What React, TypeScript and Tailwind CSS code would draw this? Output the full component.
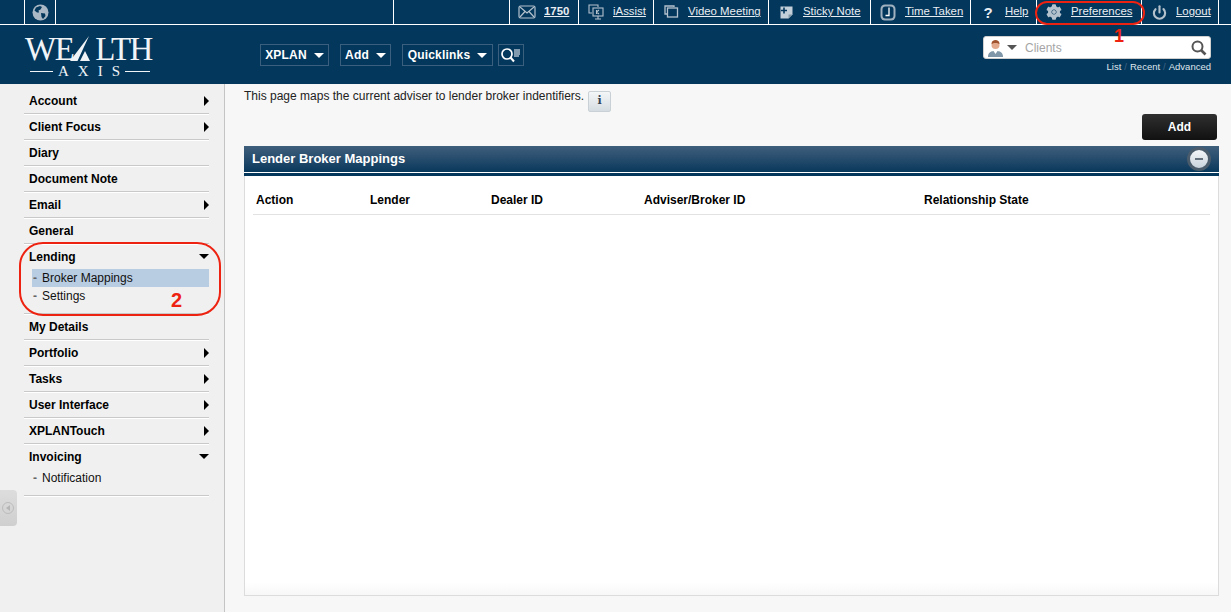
import { Power } from "lucide-react";
import { FaCog } from "react-icons/fa";

const font = "font-['Liberation_Sans',Arial,sans-serif]";

function Caret({ className = "" }: { className?: string }) {
  return (
    <span
      className={`inline-block w-0 h-0 border-l-[5px] border-r-[5px] border-t-[5px] border-l-transparent border-r-transparent ${className}`}
    />
  );
}

function TopCell({ w, icon, label, bold }: { w: string; icon: React.ReactNode; label?: string; bold?: boolean }) {
  return (
    <div className={`${w} h-6 border-r border-white flex items-center pl-2 shrink-0`}>
      <div className="w-[18px] flex justify-center shrink-0">{icon}</div>
      {label && (
        <span className={`ml-2 text-[11.4px] underline whitespace-nowrap text-[#e8edf2] ${bold ? "font-bold" : ""}`}>
          {label}
        </span>
      )}
    </div>
  );
}

function MenuButton({ label, w }: { label: string; w: string }) {
  return (
    <div className={`${w} h-[22px] border border-[#3b5f7f] flex items-center justify-center gap-[7px] text-white text-xs font-bold`}>
      <span className="tracking-[0.2px]">{label}</span>
      <Caret className="border-t-white" />
    </div>
  );
}

const items = [
  { label: "Account", arrow: true },
  { label: "Client Focus", arrow: true },
  { label: "Diary" },
  { label: "Document Note" },
  { label: "Email", arrow: true },
  { label: "General" },
  { label: "Lending", open: true, subs: ["Broker Mappings", "Settings"] },
  { label: "My Details" },
  { label: "Portfolio", arrow: true },
  { label: "Tasks", arrow: true },
  { label: "User Interface", arrow: true },
  { label: "XPLANTouch", arrow: true },
  { label: "Invoicing", open: true, subs: ["Notification"] },
];

function SideItem({ item }: { item: (typeof items)[number] }) {
  return (
    <div className="border-b border-[#c9c9c9] shadow-[0_1px_0_#fff]">
      <div className="h-[25px] flex items-center justify-between pl-[5px]">
        <span className="text-xs font-bold text-black">{item.label}</span>
        {item.arrow && (
          <span className="w-0 h-0 border-t-[5px] border-b-[5px] border-l-[5px] border-t-transparent border-b-transparent border-l-black" />
        )}
        {item.open && <Caret className="border-t-black" />}
      </div>
      {item.subs && (
        <div className="pl-2 pb-2">
          {item.subs.map((s) => (
            <div
              key={s}
              className={`h-[18px] flex items-center text-xs text-[#111] pl-px ${s === "Broker Mappings" ? "bg-[#b8cce2]" : ""}`}
            >
              <span className="text-[#666] mr-[5px] font-bold">-</span>
              {s}
            </div>
          ))}
        </div>
      )}
    </div>
  );
}

export default function App() {
  return (
    <div className={`${font} relative w-[1231px] h-[612px] overflow-hidden bg-[#f7f7f7] flex flex-col`}>
      {/* top strip */}
      <div className="h-[25px] bg-[#04375c] border-b border-white flex shrink-0">
        <div className="w-[25px] border-r border-white" />
        <div className="w-[31px] border-r border-white flex items-center justify-center">
          <svg width="17" height="17" viewBox="0 0 17 17">
            <circle cx="8.5" cy="8.5" r="8" fill="#a9b8c4" />
            <path d="M4 3.5l4-1.5 2 1-1.5 2.5-2 1 .5 2-2 0-2.5-2zM9 9l4 .5 .5 2.5-2.5 3-1.5-2z" fill="#04375c" />
          </svg>
        </div>
        <div className="w-[338px] border-r border-white" />
        <div className="w-[116px] border-r border-white" />
        <TopCell
          w="w-[69px]"
          bold
          label="1750"
          icon={
            <svg width="18" height="14" viewBox="0 0 18 14" fill="none" stroke="#b4c2cd" strokeWidth="1.2">
              <rect x="1" y="1" width="16" height="12" rx="1.5" />
              <path d="M2 2l7 6 7-6M2 12l5-5.5M16 12l-5-5.5" />
            </svg>
          }
        />
        <TopCell
          w="w-[75px]"
          label="iAssist"
          icon={
            <svg width="16" height="16" viewBox="0 0 16 16" fill="none" stroke="#b4c2cd" strokeWidth="1.1">
              <path d="M10 3V1H1v8h3" />
              <rect x="5" y="4" width="10" height="8" />
              <path d="M10 12v3M7 15h6M8.5 6v4M8.5 8l2.5-2M8.5 8l2.5 2" />
            </svg>
          }
        />
        <TopCell
          w="w-[115px]"
          label="Video Meeting"
          icon={
            <svg width="15" height="14" viewBox="0 0 15 14" fill="none" stroke="#b4c2cd" strokeWidth="1.3">
              <path d="M10 2V1H1v8h2" />
              <rect x="3.5" y="3" width="10" height="9" />
            </svg>
          }
        />
        <TopCell
          w="w-[102px]"
          label="Sticky Note"
          icon={
            <svg width="13" height="13" viewBox="0 0 13 13">
              <path d="M0.500 0.500h12v8l-4 4h-8z" fill="#c4d0d9" />
              <path d="M4 1.500v6M1 4.500h6" stroke="#04375c" strokeWidth="1.600" />
              <path d="M8.500 12.500V8.500h4z" fill="#8097a8" />
            </svg>
          }
        />
        <TopCell
          w="w-[100px]"
          label="Time Taken"
          icon={
            <svg width="16" height="17" viewBox="0 0 16 17">
              <rect x="0.500" y="0.500" width="15" height="16" rx="4.500" fill="#9fb0be" />
              <rect x="2.500" y="2.500" width="11" height="12" rx="3" fill="#04375c" />
              <path d="M9 3.500v8H5.500" stroke="#fff" strokeWidth="1.300" fill="none" />
            </svg>
          }
        />
        <TopCell
          w="w-[66px]"
          label="Help"
          icon={<span className="text-[15px] leading-none font-bold text-[#e8edf2]">?</span>}
        />
        <TopCell
          w="w-[105px]"
          label="Preferences"
          icon={
            <span className="relative flex items-center justify-center">
              <FaCog size={16} color="#b4c2cd" />
              <span className="absolute w-1 h-1 rounded-full bg-[#b4c2cd]" />
            </span>
          }
        />
        <TopCell w="w-[77px]" label="Logout" icon={<Power size={15} stroke="#b4c2cd" strokeWidth={3.4} />} />
      </div>

      {/* header */}
      <div className="h-[59px] bg-[#04375c] flex shrink-0 relative">
        <div className="w-[260px] pl-[25px] pt-3 shrink-0 text-[#f1f4f7] font-['Liberation_Serif',serif]">
          <div className="flex items-end h-6 w-[130px] text-[33px] leading-6">
            <span className="tracking-[-1.5px]">WE</span>
            <svg width="25" height="26" viewBox="0 0 25 26" className="shrink-0 -mb-px -ml-[3px]">
              <path d="M0 25L19 0 7.500 25zM10 25l5-10 5 10z" fill="#f1f4f7" />
            </svg>
            <span className="tracking-[-1.5px]">LTH</span>
          </div>
          <div className="flex items-center w-[120px] ml-[5px] mt-1 text-[15px] leading-3">
            <span className="w-[23px] h-px bg-[#f1f4f7]" />
            <span className="flex-1 flex justify-between px-[5px]">
              <span>A</span>
              <span>X</span>
              <span>I</span>
              <span>S</span>
            </span>
            <span className="w-[25px] h-px bg-[#f1f4f7]" />
          </div>
        </div>
        <div className="flex pt-[19px] gap-[11px] items-start">
          <MenuButton label="XPLAN" w="w-[69px]" />
          <MenuButton label="Add" w="w-[51px]" />
          <div className="flex gap-[5px]">
            <MenuButton label="Quicklinks" w="w-[91px]" />
            <div className="w-[26px] h-[22px] border border-[#3b5f7f] flex items-center justify-center">
              <svg width="22" height="16" viewBox="0 0 22 16" fill="none" stroke="#fff">
                <circle cx="7" cy="7" r="5" strokeWidth="1.7" />
                <path d="M10.5 10.5L14 14.5" strokeWidth="2" />
                <path d="M14 3h6M14 5h6M14 7h6M14 9h5" strokeWidth="1" />
              </svg>
            </div>
          </div>
        </div>
        <div className="ml-auto mr-5 pt-[11px] w-[228px]">
          <div className="h-[23px] bg-white rounded-[3px] border border-[#d0d0d0] flex items-center pl-[4px] pr-[3px]">
            <svg width="15" height="18" viewBox="0 0 15 18">
              <path d="M0 18c0-5 3-6 7.5-6s7.500 1 7.500 6z" fill="#7f97a8" />
              <path d="M5.500 12h4l-2 3z" fill="#fff" />
              <circle cx="7.500" cy="6" r="4" fill="#e2a98c" />
              <path d="M3.500 5c0-3 2-4 4-4s4 1 4 4c-2-1.500-6-1.500-8 0z" fill="#a0522d" />
            </svg>
            <Caret className="ml-[4px] border-t-[#555]" />
            <span className="ml-2 text-xs text-[#a5a5a5]">Clients</span>
            <svg className="ml-auto" width="16" height="16" viewBox="0 0 16 16" fill="none" stroke="#555">
              <circle cx="6.500" cy="6.500" r="5" strokeWidth="2" />
              <path d="M10 10l4.500 4.500" strokeWidth="2.600" />
            </svg>
          </div>
          <div className="mt-[2px] flex justify-end items-center text-[9.500px] leading-[12px] text-[#dfe6ec]">
            <span>List</span>
            <span className="mx-[3px] text-[#3f6585]">/</span>
            <span>Recent</span>
            <span className="mx-[3px] text-[#3f6585]">/</span>
            <span>Advanced</span>
          </div>
        </div>
      </div>

      <div className="flex flex-1 min-h-0">
        {/* sidebar */}
        <div className="w-[225px] shrink-0 bg-[#f0f0f0] border-r border-[#c4c4c4] pl-6 pr-[15px] pt-1">
          {items.map((item) => (
            <SideItem key={item.label} item={item} />
          ))}
        </div>

        {/* content */}
        <div className="flex-1 min-w-0 pl-[19px] pr-3 flex flex-col">
          <div className="h-[30px] flex items-start pt-[5px]">
            <span className="text-xs leading-[14px] text-[#222]">This page maps the current adviser to lender broker indentifiers.</span>
            <div className="ml-[4px] mt-[2px] w-[23px] h-[21px] rounded-[2px] border border-[#c9d1d6] bg-gradient-to-b from-[#f4f6f7] to-[#d5dde2] flex items-center justify-center font-['DejaVu_Serif',serif] font-bold text-[11px] text-[#345]">
              i
            </div>
          </div>
          <div className="flex justify-end pr-[2px]">
            <div className="w-[75px] h-[26px] rounded-[3px] bg-gradient-to-b from-[#303030] to-[#111] flex items-center justify-center text-white text-xs font-bold">
              Add
            </div>
          </div>
          <div className="mt-[6px] h-[450px] flex flex-col">
            <div className="h-[26px] bg-gradient-to-b from-[#3f5f7c] to-[#06385c] flex items-center justify-between pl-2 pr-2 shrink-0">
              <span className="text-white text-[13px] font-bold">Lender Broker Mappings</span>
              <span className="w-[24px] h-[24px] rounded-full border-[3px] border-[#4a5c6c] bg-gradient-to-b from-[#f4f6f8] to-[#c9d3dc] flex items-center justify-center">
                <span className="w-2 h-[2px] bg-[#64717d]" />
              </span>
            </div>
            <div className="h-[4px] shrink-0 border-t border-white bg-[#04375c]" />
            <div className="flex-1 bg-gradient-to-b from-white from-[97%] to-[#f7f7f7] border-x border-b border-[#dcdcdc] px-2">
              <div className="h-[38px] mt-[1px] border-b border-[#e2e2e2] flex items-end pb-[6px] pl-[3px] text-xs font-bold text-black">
                <span className="w-[114px]">Action</span>
                <span className="w-[121px]">Lender</span>
                <span className="w-[153px]">Dealer ID</span>
                <span className="w-[280px]">Adviser/Broker ID</span>
                <span>Relationship State</span>
              </div>
            </div>
          </div>
        </div>
      </div>

      {/* sidebar collapse tab */}
      <div className="absolute left-0 top-[490px] w-[17px] h-9 rounded-r-[4px] bg-gradient-to-b from-[#dddddd] to-[#cfcfcf] flex items-center pl-[2px]">
        <span className="w-3 h-3 rounded-full border border-[#bcbcbc] flex items-center justify-center">
          <span className="w-0 h-0 border-t-[3px] border-b-[3px] border-r-[4px] border-t-transparent border-b-transparent border-r-[#b5b5b5]" />
        </span>
      </div>

      {/* red annotations */}
      <div className="absolute left-[1035px] top-px w-[110px] h-6 rounded-full border-2 border-[#ee2211]" />
      <div className="absolute left-[1114px] top-[27px] text-lg leading-[18px] font-bold text-[#ee2211]">1</div>
      <div className="absolute left-[19px] top-[242px] w-[202px] h-[74px] rounded-[24px] border-2 border-[#ee2211]" />
      <div className="absolute left-[171px] top-[290px] text-xl leading-5 font-bold text-[#ee2211]">2</div>
    </div>
  );
}
